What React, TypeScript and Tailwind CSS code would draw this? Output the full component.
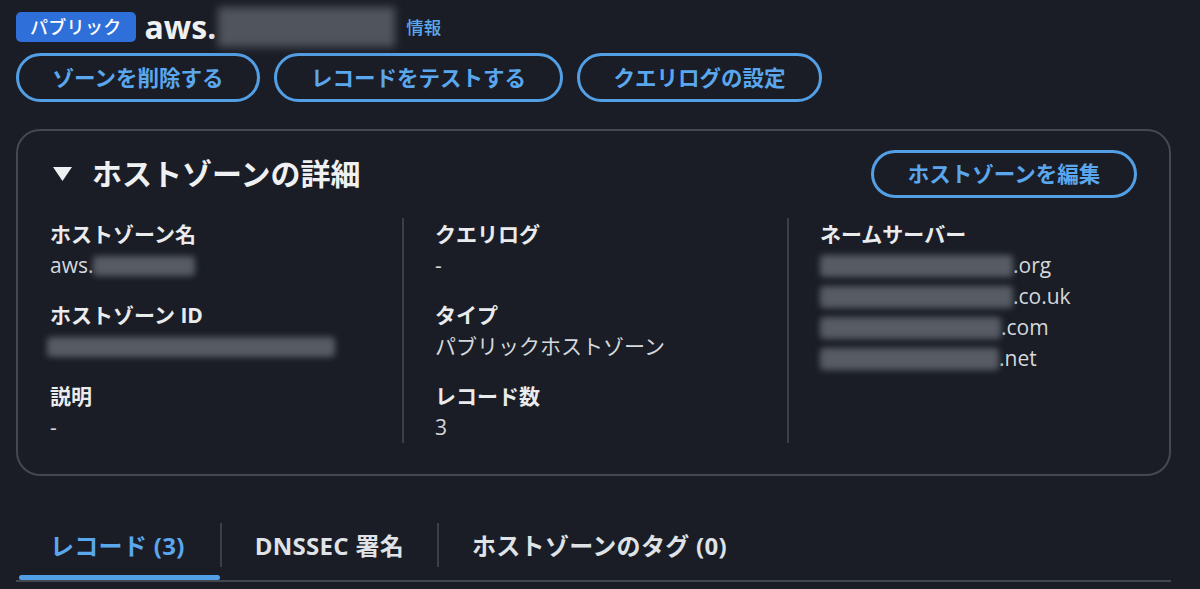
import React from "react";

const Blur = ({ w, h = "h-[22px]" }: { w: string; h?: string }) => (
  <span className={`inline-block ${w} ${h} bg-[#565b64] blur-[3px] rounded-sm`} />
);

const OutlineBtn = ({ children, w }: { children: React.ReactNode; w: string }) => (
  <button
    className={`${w} h-[49px] rounded-full border-[3px] border-[#539fe5] text-[#5aa7ee] text-[21.5px] font-bold flex items-center justify-center leading-none`}
  >
    {children}
  </button>
);

const Label = ({ children }: { children: React.ReactNode }) => (
  <div className="text-[21px] leading-[32px] font-bold text-[#e9ebed]">{children}</div>
);
const Value = ({ children }: { children: React.ReactNode }) => (
  <div className="h-[31px] text-[21px] leading-[31px] text-[#d5d8dc] flex items-center">{children}</div>
);

export default function App() {
  return (
    <div className="w-[1200px] h-[589px] overflow-hidden bg-[#1a1d25] text-[#e9ebed] font-['Open_Sans','Noto_Sans_CJK_JP',sans-serif]">
      <div className="pl-4 w-[1171px]">
        {/* header */}
        <div className="pt-[5px] h-[49px] flex items-center">
          <span className="h-[30px] px-[14px] rounded-[5px] bg-[#2f6fd9] text-white text-[18px] leading-[30px] font-medium tracking-[0.3px]">
            パブリック
          </span>
          <span className="ml-[9px] text-[32px] font-bold leading-none text-[#eef0f2]">aws.</span>
          <span className="ml-[2px] inline-block w-[177px] h-[40px] bg-[#50545d] blur-[4px]" />
          <span className="ml-[11px] text-[17.5px] text-[#5aa7ee] font-medium">情報</span>
        </div>

        {/* action buttons */}
        <div className="mt-[4px] flex gap-[14px]">
          <OutlineBtn w="w-[244px]">ゾーンを削除する</OutlineBtn>
          <OutlineBtn w="w-[289px]">レコードをテストする</OutlineBtn>
          <OutlineBtn w="w-[245px]">クエリログの設定</OutlineBtn>
        </div>

        {/* details card */}
        <div className="mt-[27px] border-2 border-[#434852] rounded-[24px] px-[32px] pt-[19px] pb-[31px]">
          <div className="flex items-center justify-between h-[48px]">
            <div className="flex items-center">
              <svg width="19" height="14" viewBox="0 0 19 14" className="ml-[3px]">
                <polygon points="0,0 19,0 9.5,14" fill="#eef0f2" />
              </svg>
              <span className="ml-[20px] text-[30px] font-bold leading-none text-[#eef0f2]">ホストゾーンの詳細</span>
            </div>
            <OutlineBtn w="w-[266px] !h-[48px]">ホストゾーンを編集</OutlineBtn>
          </div>

          <div className="mt-[20px] grid grid-cols-[352px_385px_1fr]">
            <div className="flex flex-col gap-[18px]">
              <div>
                <Label>ホストゾーン名</Label>
                <Value>
                  aws.<Blur w="w-[102px]" h="h-[20px]" />
                </Value>
              </div>
              <div>
                <Label>ホストゾーン ID</Label>
                <Value>
                  <span className="-ml-[3px] flex">
                    <Blur w="w-[288px]" h="h-[20px]" />
                  </span>
                </Value>
              </div>
              <div>
                <Label>説明</Label>
                <Value>-</Value>
              </div>
            </div>
            <div className="border-l-2 border-[#3b3f48] pl-[31px] flex flex-col gap-[18px]">
              <div>
                <Label>クエリログ</Label>
                <Value>-</Value>
              </div>
              <div>
                <Label>タイプ</Label>
                <Value>パブリックホストゾーン</Value>
              </div>
              <div>
                <Label>レコード数</Label>
                <Value>3</Value>
              </div>
            </div>
            <div className="border-l-2 border-[#3b3f48] pl-[31px]">
              <Label>ネームサーバー</Label>
              <Value>
                <Blur w="w-[193px]" />
                .org
              </Value>
              <Value>
                <Blur w="w-[193px]" />
                .co.uk
              </Value>
              <Value>
                <Blur w="w-[181px]" />
                .com
              </Value>
              <Value>
                <Blur w="w-[179px]" />
                .net
              </Value>
            </div>
          </div>
        </div>

        {/* tabs */}
        <div className="mt-[29px] h-[77px] border-b-2 border-[#414750] flex">
          <div className="relative flex items-center pt-[7px] pl-[34px] pr-[35px] text-[24px] tracking-[0.3px] font-bold text-[#5aa7ee] whitespace-nowrap">
            レコード (3)
            <span className="absolute left-[3px] right-0 bottom-0 h-[5px] rounded-full bg-[#539fe5]" />
          </div>
          <div className="self-center mt-[5px] w-[2px] h-[44px] bg-[#3b3f48]" />
          <div className="flex items-center pt-[7px] px-[33px] text-[24px] tracking-[0.3px] font-bold text-[#dfe2e6] whitespace-nowrap">
            DNSSEC 署名
          </div>
          <div className="self-center mt-[5px] w-[2px] h-[44px] bg-[#3b3f48]" />
          <div className="flex items-center pt-[7px] px-[33px] text-[24px] tracking-[0.3px] font-bold text-[#dfe2e6] whitespace-nowrap">
            ホストゾーンのタグ (0)
          </div>
        </div>
      </div>
    </div>
  );
}
